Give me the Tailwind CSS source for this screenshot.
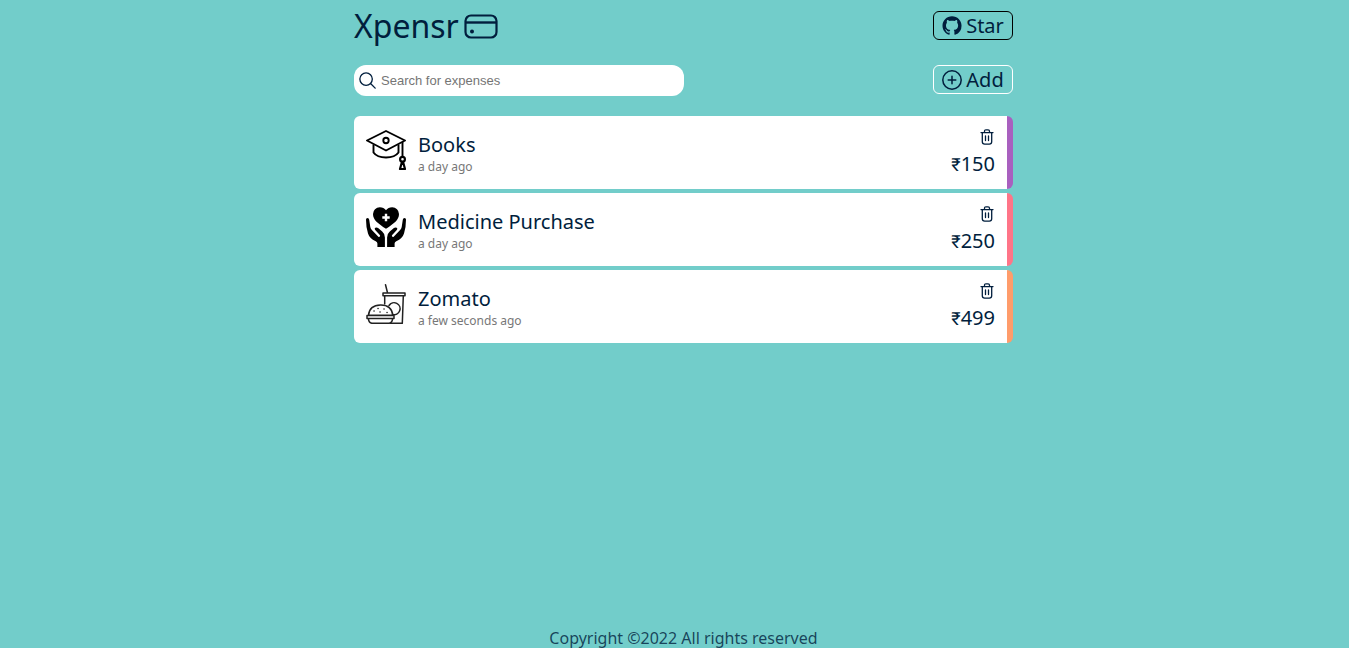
<!DOCTYPE html>
<html lang="en">
<head>
<meta charset="utf-8">
<meta name="viewport" content="width=device-width, initial-scale=1">
<title>Xpensr</title>
<script src="https://cdn.jsdelivr.net/npm/@tailwindcss/browser@4"></script>
</head>
<body class="flex min-h-screen flex-col bg-[#72cdca] pl-[18px] font-['Noto_Sans',sans-serif] text-[#011e3d]">
<svg class="hidden" aria-hidden="true">
  <symbol id="trash" viewBox="0 0 14 16" fill="none" stroke="currentColor" stroke-width="1.3" stroke-linecap="round" stroke-linejoin="round">
    <path d="M1 3.6h12M4.5 3.4V2.2Q4.5.8 5.9.8h2.2q1.4 0 1.4 1.4v1.2M2.3 3.8v9q0 2.4 2.4 2.4h4.6q2.4 0 2.4-2.4v-9M5.5 7v4.5M8.5 7v4.5"/>
  </symbol>
</svg>
<div class="mx-auto flex w-full max-w-[659px] grow flex-col">
  <header class="flex items-start justify-between">
    <h1 class="flex h-[54px] items-center gap-[5px] pb-[2px] text-[32px] leading-[52px]">Xpensr
      <svg class="h-[25px] w-[34px]" viewBox="0 0 34 25" fill="none" stroke="currentColor" aria-hidden="true"><rect x="1.5" y="1.5" width="31" height="22" rx="5.5" stroke-width="2.2"/><path d="M2 8.5h30" stroke-width="2.4"/><circle cx="8" cy="17.5" r="2" fill="currentColor" stroke="none"/></svg>
    </h1>
    <a href="#" class="mt-[11px] flex h-[29px] w-20 items-center justify-center gap-1 rounded-md border border-black text-xl">
      <svg class="size-5" viewBox="0 0 20 20" fill="currentColor" aria-hidden="true"><path transform="translate(.5 .2) scale(1.19)" d="M8 0C3.58 0 0 3.58 0 8c0 3.54 2.29 6.53 5.47 7.59.4.07.55-.17.55-.38 0-.19-.01-.82-.01-1.49-2.01.37-2.53-.49-2.69-.94-.09-.23-.48-.94-.82-1.13-.28-.15-.68-.52-.01-.53.63-.01 1.08.58 1.23.82.72 1.21 1.87.87 2.33.66.07-.52.28-.87.51-1.07-1.78-.2-3.64-.89-3.64-3.95 0-.87.31-1.59.82-2.15-.08-.2-.36-1.02.08-2.12 0 0 .67-.21 2.2.82.64-.18 1.32-.27 2-.27s1.36.09 2 .27c1.53-1.04 2.2-.82 2.2-.82.44 1.1.16 1.92.08 2.12.51.56.82 1.27.82 2.15 0 3.07-1.87 3.75-3.65 3.95.29.25.54.73.54 1.48 0 1.07-.01 1.93-.01 2.2 0 .21.15.46.55.38A8.01 8.01 0 0 0 16 8c0-4.42-3.58-8-8-8z"/></svg>Star</a>
  </header>
  <div class="mt-[11px] flex items-start justify-between">
    <label class="flex h-[31px] w-1/2 items-center gap-[5px] rounded-xl bg-white pl-[5px]">
      <svg class="size-[17px] shrink-0" viewBox="0 0 18 18" fill="none" stroke="currentColor" stroke-width="1.4" stroke-linecap="round" aria-hidden="true"><circle cx="7.5" cy="7.5" r="6.6"/><path d="m12.5 12.5 4.6 4.6"/></svg>
      <input type="text" aria-label="Search for expenses" placeholder="Search for expenses" class="min-w-0 grow bg-transparent font-['Liberation_Sans',sans-serif] text-[13px] outline-none placeholder:text-[#757575]">
    </label>
    <button type="button" class="flex h-[29px] w-20 items-center justify-center gap-1 rounded-md border border-white text-xl">
      <svg class="size-5" viewBox="0 0 20 20" fill="none" stroke="currentColor" stroke-width="1.5" stroke-linecap="round" aria-hidden="true"><circle cx="10" cy="10" r="9.2"/><path d="M10 6.2v7.6M6.2 10h7.6"/></svg>Add</button>
  </div>
  <main class="mt-5">
    <ul class="flex flex-col gap-1">
      <li class="flex h-[73px] rounded-md border-r-6 border-[#a960bf] bg-white px-3">
        <svg class="mt-[14px] size-10 shrink-0 text-black" viewBox="0 0 40 40" fill="none" stroke="currentColor" stroke-width="1.9" stroke-linejoin="round" aria-hidden="true"><path d="M1 10.5 20 1l19 9.5L20 20.5Z"/><circle cx="20" cy="10.5" r="2.7"/><path d="M7.5 14.5v8Q11 27.5 20 27.5t12.5-5v-8M36.5 12v14.5"/><circle cx="36.5" cy="29.3" r="2.4" stroke-width="2.2"/><path d="M35.8 32.5 34 39h5l-1.8-6.5Z" stroke-width="2.2"/></svg>
        <div class="ml-3 grow pt-[15px]"><h2 class="text-xl leading-7">Books</h2><p class="text-xs text-[#777]">a day ago</p></div>
        <div class="flex flex-col items-end pt-[13px]"><button type="button" aria-label="Delete Books" class="mr-px h-4 w-[14px]"><svg class="h-4 w-[14px]"><use href="#trash"/></svg></button><p class="mt-[5px] text-xl"><span class="font-['Roboto',sans-serif] text-lg leading-none">₹</span>150</p></div>
      </li>
      <li class="flex h-[73px] rounded-md border-r-6 border-[#ff7588] bg-white px-3">
        <svg class="mt-[14px] size-10 shrink-0 text-black" viewBox="0 0 40 40" fill="currentColor" aria-hidden="true"><path d="M20 21.8C12 16.5 7 13 7 7A6.8 6.8 0 0 1 13.8.2Q17.8.2 20 3.2 22.200.2 26.200.2A6.8 6.8 0 0 1 33 7c0 6-5 9.500-13 14.8Z"/><path d="M20 6.800v7.400M16.300 10.500h7.400" stroke="white" stroke-width="2.4"/><path id="hand" d="M0 12.5q0-1.500 1.500-1.500T3.200 12.700L4.300 20q.3 1.700 1.800 3.200l6 6.200q1 .9 1.700.2t0-1.600l-4.600-5q-1.200-1.400.1-2.200 1.400-.8 2.800.3l4.100 3.400q2.700 2.200 2.700 6V40h-7.500v-3.500q0-1.300-1.700-2.200-6.300-3-7.700-7.800Q0 20.500 0 12.500Z"/><use href="#hand" transform="matrix(-1 0 0 1 40 0)"/></svg>
        <div class="ml-3 grow pt-[15px]"><h2 class="text-xl leading-7">Medicine Purchase</h2><p class="text-xs text-[#777]">a day ago</p></div>
        <div class="flex flex-col items-end pt-[13px]"><button type="button" aria-label="Delete Medicine Purchase" class="mr-px h-4 w-[14px]"><svg class="h-4 w-[14px]"><use href="#trash"/></svg></button><p class="mt-[5px] text-xl"><span class="font-['Roboto',sans-serif] text-lg leading-none">₹</span>250</p></div>
      </li>
      <li class="flex h-[73px] rounded-md border-r-6 border-[#ff9c6b] bg-white px-3">
        <svg class="mt-[14px] size-10 shrink-0 text-[#222]" viewBox="0 0 40 40" fill="none" stroke="currentColor" stroke-width="1.5" stroke-linejoin="round" stroke-linecap="round" aria-hidden="true"><path d="m19.500.8 2 8M17 9h22v2.800H17ZM18.700 12v8M37.300 12l-1 27.300H24.500"/><path d="M23 21.500a6 6 0 1 1 3.500 9"/><path d="M2.500 31.200Q3.500 21.200 14.500 21t12.300 10.200ZM1 31.500h27v3H1ZM2.300 34.700Q3 39.300 6.300 39.300h16.400q3.300 0 4-4.600"/><path d="M8 27h.1M12 24.500h.1M14 28h.1M18 25h.1M21 28.500h.1"/></svg>
        <div class="ml-3 grow pt-[15px]"><h2 class="text-xl leading-7">Zomato</h2><p class="text-xs text-[#777]">a few seconds ago</p></div>
        <div class="flex flex-col items-end pt-[13px]"><button type="button" aria-label="Delete Zomato" class="mr-px h-4 w-[14px]"><svg class="h-4 w-[14px]"><use href="#trash"/></svg></button><p class="mt-[5px] text-xl"><span class="font-['Roboto',sans-serif] text-lg leading-none">₹</span>499</p></div>
      </li>
    </ul>
  </main>
  <footer class="mt-auto text-center leading-5 text-[#011e3d]/80">Copyright ©2022 All rights reserved</footer>
</div>
</body>
</html>
